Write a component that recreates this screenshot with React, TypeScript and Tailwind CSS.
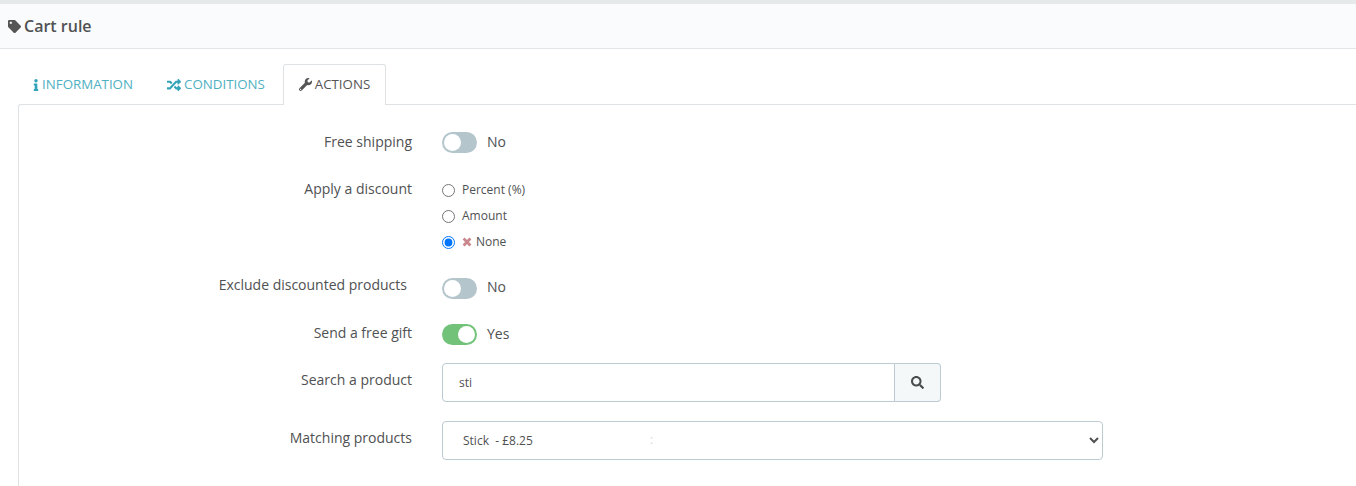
import { FaTag, FaInfo, FaRandom, FaWrench, FaSearch } from 'react-icons/fa'

function Toggle({ on }: { on?: boolean }) {
  return (
    <div className={`flex h-[21px] w-[35px] items-center rounded-full px-[2px] ${on ? 'justify-end bg-[#72c279]' : 'justify-start bg-[#b4c5cc]'}`}>
      <div className="h-[17px] w-[17px] rounded-full bg-white" />
    </div>
  )
}

function Row({ label, className, labelClass, children }: { label: string; className: string; labelClass?: string; children: React.ReactNode }) {
  return (
    <div className={`flex items-start ${className}`}>
      <label className={`w-[393px] shrink-0 text-right text-[14px] leading-[20px] ${labelClass ?? ''}`}>{label}</label>
      <div className="ml-[30px] flex-1">{children}</div>
    </div>
  )
}

function SwitchField({ on, className, textClass }: { on?: boolean; className?: string; textClass: string }) {
  return (
    <div className={`flex items-center gap-[10px] text-[14px] leading-[21px] ${className ?? ''}`}>
      <Toggle on={on} />
      <span className={textClass}>{on ? 'Yes' : 'No'}</span>
    </div>
  )
}

function Radio({ label, checked, icon }: { label: string; checked?: boolean; icon?: boolean }) {
  return (
    <label className="flex h-[26px] items-center text-[12px]">
      <input type="radio" name="discount" defaultChecked={checked} className="m-0 h-[13px] w-[13px]" />
      {icon && (
        <svg viewBox="0 0 10 10" className="ml-[7px] h-[10px] w-[10px]">
          <path d="M1.6 1.6 8.4 8.4M8.4 1.6 1.6 8.4" stroke="#c9868b" strokeWidth="2.8" />
        </svg>
      )}
      <span className={icon ? 'ml-[4px]' : 'ml-[7px]'}>{label}</span>
    </label>
  )
}

export default function App() {
  return (
    <div className="h-[486px] w-[1356px] overflow-hidden bg-white font-['Open_Sans',sans-serif] text-[#4f5152]">
      <div className="h-[4px] bg-[#e6e9ea]" />
      <div className="flex h-[45px] items-center gap-[3px] border-b border-[#e3e6e8] bg-[#f9fbfc] pl-[8px]">
        <FaTag className="text-[13px] text-[#555]" />
        <h1 className="text-[16px] font-semibold text-[#505254]">Cart rule</h1>
      </div>

      <div className="pl-[18px] pt-[15px]">
        <ul className="flex h-[41px] items-stretch pl-[1px] text-[13.3px]">
          <li className="flex w-[130px] items-center justify-center pr-[5px] text-[#4fb0c2]">
            <FaInfo className="text-[12px] text-[#33a3b8]" />
            <span>INFORMATION</span>
          </li>
          <li className="flex w-[134px] items-center justify-center gap-[3px] text-[#4fb0c2]">
            <FaRandom className="text-[14px] text-[#33a3b8]" />
            CONDITIONS
          </li>
          <li className="relative z-10 flex h-[41px] w-[103px] items-center justify-center gap-[3px] rounded-t-[3px] border border-b-0 border-[#dfe2e4] bg-white pb-[1px] text-[#555]">
            <FaWrench className="text-[13px] text-[#555]" />
            ACTIONS
          </li>
        </ul>

        <div className="-mt-px h-[400px] rounded-tl-[3px] border-l border-t border-[#dfe2e4] pt-[27px]">
          <Row label="Free shipping" className="h-[47px]">
            <SwitchField className="-mt-[1px]" textClass="pb-[2px]" />
          </Row>
          <Row label="Apply a discount" className="h-[97px]">
            <div className="-mt-[2px]">
              <Radio label="Percent (%)" />
              <Radio label="Amount" />
              <Radio label="None" checked icon />
            </div>
          </Row>
          <Row label="Exclude discounted products" className="h-[47px]" labelClass="-mt-[1px] pr-[5px]">
            <SwitchField textClass="pb-[4px]" />
          </Row>
          <Row label="Send a free gift" className="h-[47px]">
            <SwitchField on textClass="pb-[2px]" />
          </Row>
          <Row label="Search a product" className="h-[58px]">
            <div className="-mt-[7px] flex h-[39px] w-[499px] text-[12px]">
              <input
                defaultValue="sti"
                className="min-w-0 flex-1 rounded-l-[4px] border border-[#bccbd2] px-[16px] outline-none"
              />
              <button className="flex w-[46px] items-center justify-center rounded-r-[4px] border border-l-0 border-[#bccbd2] bg-[#f5f8f9]">
                <FaSearch className="text-[13px] text-[#4a4c4e]" />
              </button>
            </div>
          </Row>
          <Row label="Matching products" className="h-[40px]">
            <div className="relative -mt-[7px] h-[39px] w-[661px]">
              <select className="h-full w-full rounded-[4px] border border-[#bccbd2] bg-white pl-[16px] pr-[4px] text-[12px] outline-none">
                <option>Stick {'\u00a0'}- £8.25</option>
              </select>
              <span className="absolute left-[208px] top-[10px] text-[12px] text-[#d5d8da]">:</span>
            </div>
          </Row>
        </div>
      </div>
    </div>
  )
}
